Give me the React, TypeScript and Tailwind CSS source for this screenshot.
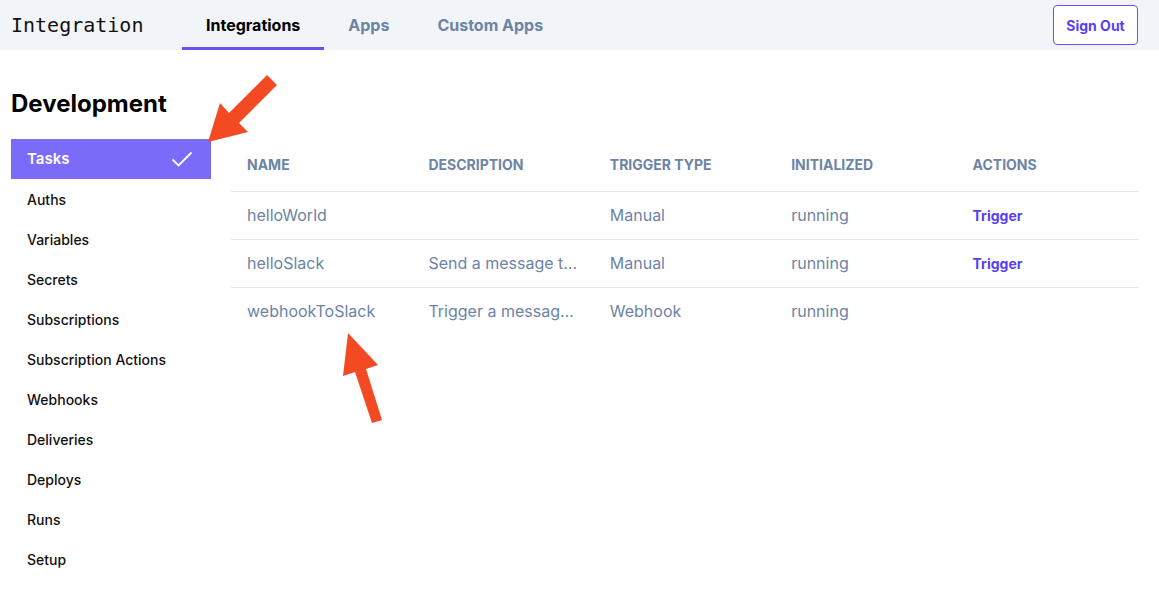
import React from "react";

const nav = ["Auths","Variables","Secrets","Subscriptions","Subscription Actions","Webhooks","Deliveries","Deploys","Runs","Setup"];

const rows = [
  { name: "helloWorld", desc: "", type: "Manual", init: "running", action: true },
  { name: "helloSlack", desc: "Send a message to a Slack channel", type: "Manual", init: "running", action: true },
  { name: "webhookToSlack", desc: "Trigger a message in Slack from a webhook", type: "Webhook", init: "running", action: false },
];

export default function App() {
  return (
    <div className="relative w-[1159px] h-[607px] bg-white overflow-hidden" style={{ fontFamily: "Inter, 'Noto Sans', sans-serif" }}>
      <header className="h-[50px] bg-[#f1f4f8] flex items-center pl-[11px] pr-[21px]">
        <div className="text-[20px] text-[#111] w-[171px]" style={{ fontFamily: "'DejaVu Sans Mono', monospace" }}>Integration</div>
        <nav className="flex h-full">
          <div className="h-full px-6 flex items-center text-[16px] font-bold text-black border-b-[3px] border-[#6a4ff5] pt-[2px]">Integrations</div>
          <div className="h-full px-6 flex items-center text-[16px] font-bold text-[#6c84a5]">Apps</div>
          <div className="h-full px-6 flex items-center text-[16px] font-bold text-[#6c84a5]">Custom Apps</div>
        </nav>
        <div className="flex-1" />
        <button className="h-[40px] w-[85px] bg-white border border-[#6a4ff5] rounded-[4px] text-[#5a3ff0] text-[14px] font-bold">Sign Out</button>
      </header>
      <div className="flex pl-[11px] pr-[21px]">
        <aside className="w-[200px] shrink-0">
          <h1 className="text-[24px] font-bold text-black mt-[38px] mb-[19px] leading-[32px]">Development</h1>
          <div className="h-[40px] bg-[#7a6cf8] flex items-center justify-between pl-4 pr-[18px] text-white text-[15px] font-semibold">
            <span>Tasks</span>
            <svg width="22" height="16" viewBox="0 0 22 16" fill="none"><path d="M1.5 8.5 L7.5 14.5 L20.5 1.5" stroke="white" strokeWidth="1.8" /></svg>
          </div>
          {nav.map((n) => (
            <div key={n} className="h-[40px] flex items-center pl-4 text-[14px] font-medium text-[#111]">{n}</div>
          ))}
        </aside>
        <main className="flex-1 ml-[20px] mt-[89px]">
          <table className="w-full table-fixed border-collapse">
            <thead>
              <tr className="border-b border-[#e2e5ea] h-[52px]">
                {["NAME","DESCRIPTION","TRIGGER TYPE","INITIALIZED","ACTIONS"].map((h) => (
                  <th key={h} className="text-left px-4 text-[14px] font-bold text-[#6c84a5] align-middle">{h}</th>
                ))}
              </tr>
            </thead>
            <tbody>
              {rows.map((r, i) => (
                <tr key={r.name} className={`h-[48px] ${i < rows.length - 1 ? "border-b border-[#e2e5ea]" : ""}`}>
                  <td className="px-4 text-[16px] text-[#6c84a5] truncate">{r.name}</td>
                  <td className="px-4 text-[16px] text-[#6c84a5] truncate">{r.desc}</td>
                  <td className="px-4 text-[16px] text-[#6c84a5] truncate">{r.type}</td>
                  <td className="px-4 text-[16px] text-[#6c84a5] truncate">{r.init}</td>
                  <td className="px-4 text-[14px] font-bold text-[#5a3ff0]">{r.action ? "Trigger" : ""}</td>
                </tr>
              ))}
            </tbody>
          </table>
        </main>
      </div>
      <svg className="absolute left-0 top-0 pointer-events-none" width="1159" height="607">
        <polygon points="208,142 220,103 229,113 267,75 277,85 239,123 248,132" fill="#f44a24" />
        <polygon points="348,333 343,376 355,372 372,423 382,420 366,369 378,365" fill="#f44a24" />
      </svg>
    </div>
  );
}
